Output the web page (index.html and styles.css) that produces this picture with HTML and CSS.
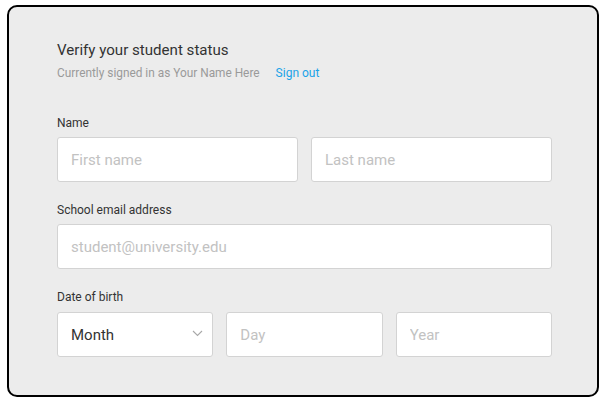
FILE: index.html
```html
<!DOCTYPE html>
<html>
<head>
<meta charset="utf-8">
<link rel="stylesheet" href="styles.css">
</head>
<body>
<div class="frame">
  <h1 class="title">Verify your student status</h1>
  <p class="subtitle"><span class="who">Currently signed in as Your Name Here</span><a class="signout" href="#">Sign out</a></p>

  <div class="group first">
    <label class="label">Name</label>
    <div class="row two">
      <input class="field" type="text" placeholder="First name">
      <input class="field" type="text" placeholder="Last name">
    </div>
  </div>

  <div class="group">
    <label class="label">School email address</label>
    <div class="row">
      <input class="field" type="text" placeholder="student@university.edu">
    </div>
  </div>

  <div class="group">
    <label class="label">Date of birth</label>
    <div class="row three">
      <div class="field select">
        <span>Month</span>
        <svg class="chev" width="11" height="7" viewBox="0 0 11 7"><path d="M1 1 L5.5 5.5 L10 1" fill="none" stroke="#a8a8a8" stroke-width="1.1"/></svg>
      </div>
      <input class="field" type="text" placeholder="Day">
      <input class="field" type="text" placeholder="Year">
    </div>
  </div>
</div>
</body>
</html>
```

FILE: styles.css
```css
* { box-sizing: border-box; }
html, body { margin: 0; padding: 0; background: #ffffff; }
body { font-family: Roboto, "Liberation Sans", sans-serif; }

.frame {
  margin: 5px 0 0 7px;
  width: 592px;
  height: 392px;
  border: 2px solid #000;
  border-radius: 10px;
  background: #ececec;
  padding: 33px 0 0 48px;
}

.title {
  margin: 0;
  font-size: 15.1px;
  line-height: 20px;
  font-weight: 400;
  color: #333333;
}

.subtitle {
  margin: 5px 0 0;
  font-size: 12px;
  line-height: 16px;
  color: #9a9a9a;
}

.who { font-size: 11.85px; }

.signout {
  color: #1aa3e8;
  text-decoration: none;
  margin-left: 16px;
}

.group { margin-top: 20px; width: 495px; }
.group.first { margin-top: 34px; }

.label {
  display: block;
  font-size: 12px;
  line-height: 16px;
  color: #333333;
  margin-bottom: 6px;
}

.group:last-child .label { margin-bottom: 7px; }

.row { display: flex; gap: 13px; }

.field {
  flex: 1;
  min-width: 0;
  height: 45px;
  border: 1px solid #d3d3d3;
  border-radius: 3px;
  background: #ffffff;
  padding: 0 13px;
  font-family: Roboto, "Liberation Sans", sans-serif;
  font-size: 15px;
  color: #333333;
  outline: none;
}

.field::placeholder { color: #c2c2c2; }

.select {
  display: flex;
  align-items: center;
  justify-content: space-between;
}

.chev { margin: 0 -4px 2px 0; }
```
